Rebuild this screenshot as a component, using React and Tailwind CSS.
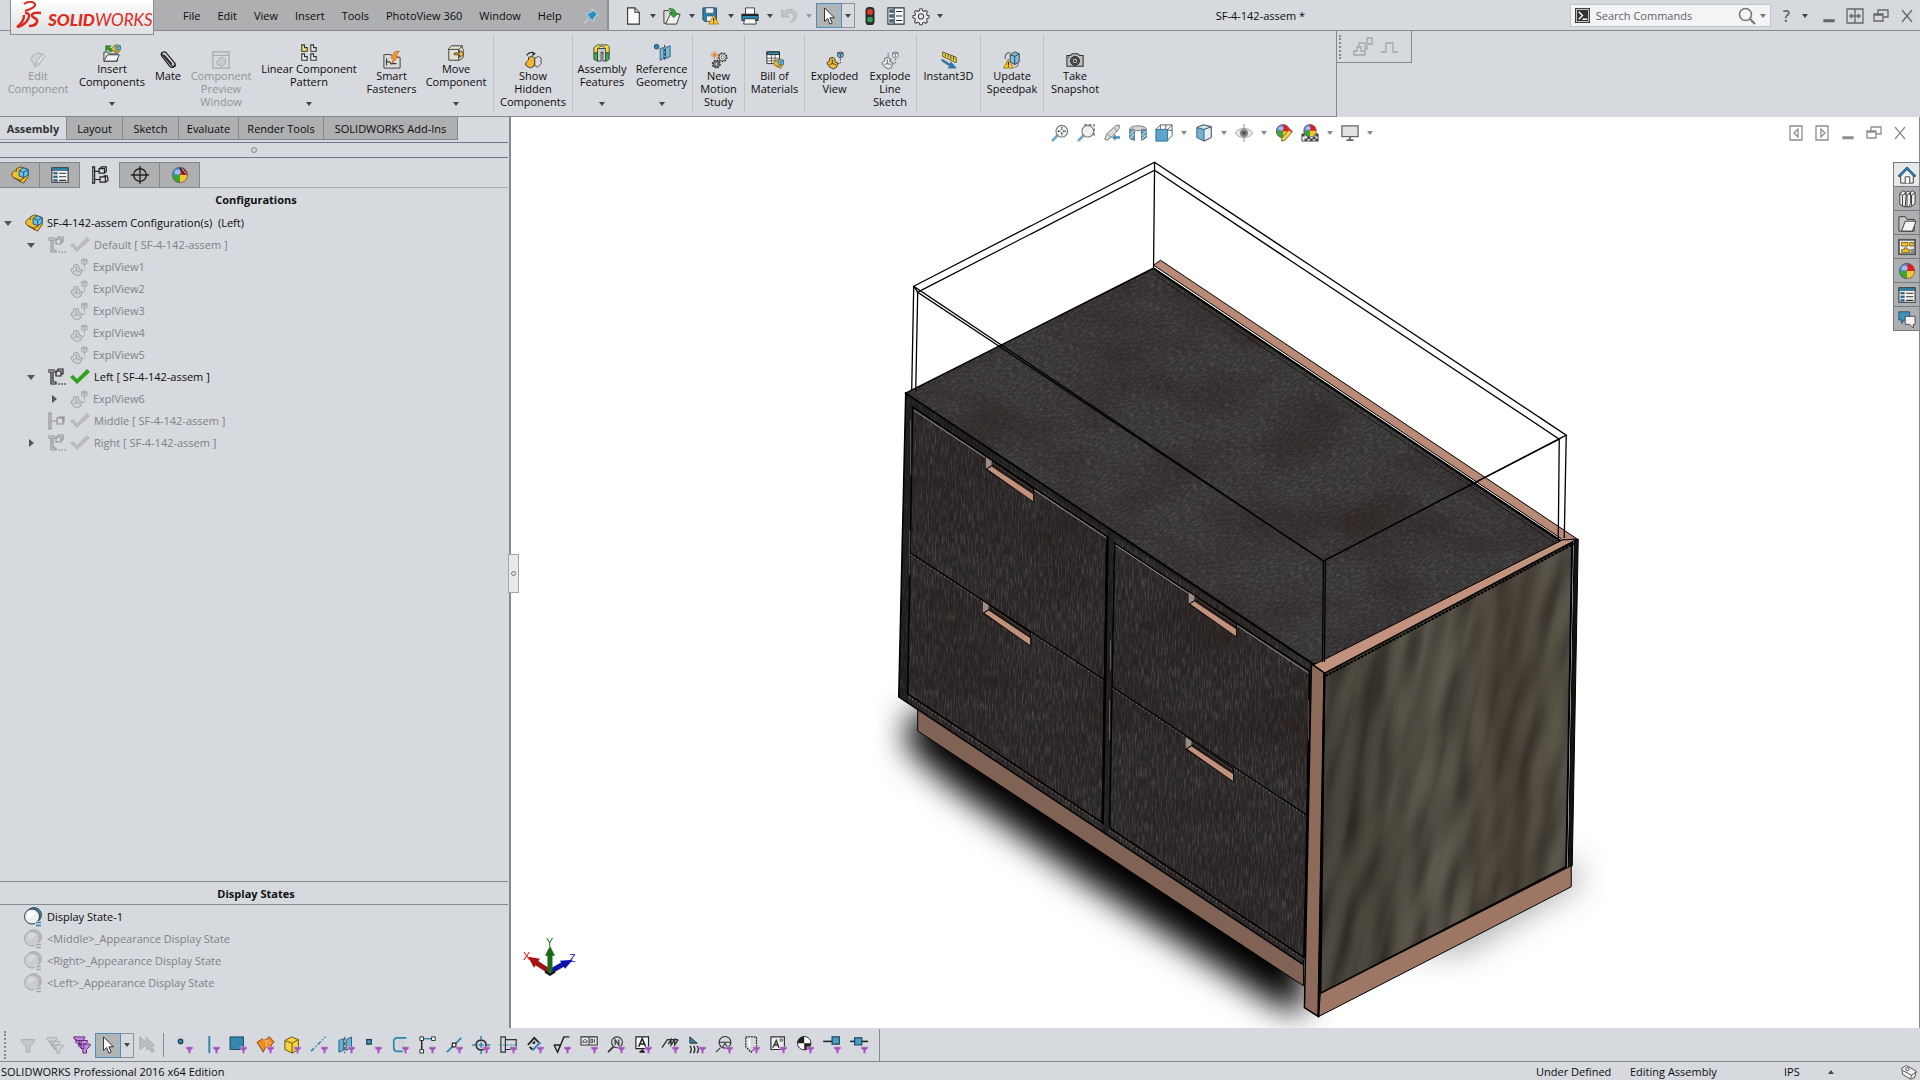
import React from "react";

const K = "#333";
const B = "#2f87b0";
const G = "#9a9c9e";

const Ball = ({ cx = 10, cy = 10, r = 8 }) => (
  <g>
    <circle cx={cx} cy={cy} r={r} fill="#e02020" />
    <path d={`M${cx} ${cy}L${cx} ${cy - r}A${r} ${r} 0 0 0 ${cx - r} ${cy}Z`} fill="#4a8fe0" />
    <path d={`M${cx} ${cy}L${cx - r} ${cy}A${r} ${r} 0 0 0 ${cx} ${cy + r}Z`} fill="#3aa53a" />
    <path d={`M${cx} ${cy}L${cx} ${cy + r}A${r} ${r} 0 0 0 ${cx + r} ${cy}Z`} fill="#f2c62e" />
    <ellipse cx={cx - r * 0.3} cy={cy - r * 0.4} rx={r * 0.4} ry={r * 0.3} fill="#fff" opacity=".45" />
    <circle cx={cx} cy={cy} r={r} fill="none" stroke="#555" strokeWidth=".7" />
  </g>
);

const Part = ({ a = "#f3bd2f", b = "#6cc0e6", s = "#5a4310" }) => (
  <g strokeLinejoin="round">
    <path d="M1 8l3-3 2 1V3l5-2 8 3v8l-5 7-4-2-7-4-2-2z" fill={a} stroke={s} />
    <path d="M3 13l7 3 5-3M10 16v2" stroke={s} fill="none" />
    <path d="M9 5l5-3 5 2v6l-5 3-5-2z" fill={b} stroke="#17506e" />
    <path d="M9 5l5 2 5-3M14 7v6" fill="none" stroke="#17506e" />
  </g>
);

const Expl = ({ a = "#f3bd2f", b = "#6cc0e6", s = K }) => (
  <g strokeLinejoin="round">
    <path d="M1 13l3-2V8l4-1 2 2v3l3 1-1 5-4 2-5-3z" fill={a} stroke={s} />
    <path d="M7 9v5l4 1M7 14l-3 1" fill="none" stroke={s} />
    <path d="M13 2l3-1 3 1v4l-3 2-3-2zM13 2l3 1 3-1M16 3v4" fill={b} stroke={s} strokeWidth=".9" />
    <path d="M16 9v5h-4" fill="none" stroke={s} strokeDasharray="1.5 1.5" />
  </g>
);

const Funnel = () => <path d="M11 12h8v2l-2.6 2v3.500h-2.800v-3.500L11 14z" fill="#a356bd" stroke="#eadcf0" strokeWidth=".5" />;

const Gear = ({ cx, cy, r, fill = "#ddd" }) => (
  <g>
    <circle cx={cx} cy={cy} r={r} fill={fill} stroke={K} strokeWidth="2" strokeDasharray="1.8 1.3" />
    <circle cx={cx} cy={cy} r={r - 0.6} fill={fill} stroke={K} strokeWidth=".8" />
    <circle cx={cx} cy={cy} r={r / 2.6} fill="#fff" stroke={K} strokeWidth=".8" />
  </g>
);

const Cursor = ({ fill = "#fff", stroke = "#222" }) => (
  <path d="M5 1v15l3.500-3.200L11 19l2.600-1.200L11 12h5z" fill={fill} stroke={stroke} strokeLinejoin="round" />
);

const List = () => (
  <g>
    <path d="M1 2h18v16H1z" fill="#f4f6f8" stroke={K} strokeWidth="1.200" />
    <path d="M1 2h18v3H1z" fill={B} stroke={K} strokeWidth=".6" />
    <path d="M3 7h4v2H3zM3 11h4v2H3zM3 15h4v2H3z" fill={B} stroke="#123" strokeWidth=".5" />
    <path d="M9 8h8M9 12h8M9 16h8" stroke={K} strokeWidth="1.200" />
  </g>
);

const Mag = ({ c = "#eef2f5" }) => (
  <g>
    <path d="M2 18l6-6" stroke="#6ea8c8" strokeWidth="3" strokeLinecap="round" />
    <circle cx="12" cy="8" r="6.500" fill={c} stroke="#777" strokeWidth="1.200" />
  </g>
);

const ICONS = {
  editComp: <g fill="none" stroke="#aaacae"><path d="M2 9l3-5 6-2 4 2v5l-4 6-5 1z" fill="#cfd1d3" /><path d="M6 18l2-6 7-9 3 3-7 9zM8 12l3 3" fill="#d9dbdd" /></g>,
  insert: <g><path d="M1 19V9h5l1 2h9v8z" fill="#e4e4e2" stroke={K} /><path d="M1 19l4-7h13l-3 7z" fill="#f4f4f2" stroke={K} /><path d="M3 8V2h6L7 4l4 3-2 2-4-3z" fill="#2f9a2f" stroke="#175c17" strokeWidth=".6" /><g transform="translate(9 0) scale(.55)"><Part /></g></g>,
  mate: <g fill="none" stroke="#222" strokeWidth="1.400" strokeLinecap="round"><path d="M4 4l10 12c1.500 2 5 .5 3.500-2.500L8 2C6 0 1 1.500 3 5.500L12 17c2 2.500 7 1 6-3" /><path d="M6 5l8 9" /></g>,
  preview: <g fill="none" stroke="#a6a8aa"><path d="M1 1h18v18H1zM1 5h18" strokeWidth="1.300" /><path d="M13 3h1M16 3h1" /><path d="M5 12l3-2V8l4-1 3 2v5l-4 3-5-2z" fill="#c9cbcd" /></g>,
  pattern: <g strokeWidth="1.200" stroke={K}>{[[2, 1], [12, 1], [2, 11], [12, 11]].map(([x, y], i) => <path key={i} d={`M${x} ${y}h3v3h3v4h-6z`} fill={i ? "#eef0f2" : "#ffe67a"} />)}</g>,
  smart: <g><path d="M1 4h8l2 3h8v12H1z" fill="#dcdcda" stroke={K} /><path d="M4 8v8M3 12h4l2 2h6" stroke={K} strokeWidth="1.200" fill="none" /><path d="M13 1l5-1-4 6h3l-8 9 3-7H9z" fill="#f6a623" stroke="#b3400c" strokeWidth=".7" /></g>,
  move: <g><path d="M2 5l3-3h12v3l1 1v9l-4 3H2z" fill="#e6e0cf" stroke={K} /><path d="M2 6h11v12M13 6l4-4" fill="none" stroke={K} /><path d="M8 10h6V7l5 4-5 4v-3H8z" fill="#f3c13a" stroke="#222" strokeWidth=".8" /></g>,
  hidden: <g><path d="M2 13l3-3V7l4-1 3 2v5l-1 4-4 2-5-3z" fill="#f3b52f" stroke={K} /><path d="M12 8l4-2 3 2v6l-4 4-3-2z" fill="#ddd" stroke={K} strokeWidth=".9" /><path d="M3 5c2-4 6-4 8-2M9 1l3 2-3 2" fill="none" stroke="#222" strokeWidth="1.300" /></g>,
  asmFeat: <g stroke={K} strokeWidth=".9"><path d="M1 4l4-3h11l2 2v7H1z" fill="#f2dc3c" /><path d="M1 10h4v9l-4-2zM14 10h4v7l-3 2h-1z" fill="#39b54a" /><path d="M5 5h9v14h-3V9H9v10H5z" fill="#c9cccf" /><path d="M6 5c0-3 7-3 7 0z" fill="#eee" /></g>,
  refGeo: <g><circle cx="4" cy="3" r="2.600" fill={B} stroke="#1a4a66" /><path d="M8 5l4-1v12l-4 2zM14 4l5-2v12l-5 2z" fill="#7fb9d6" stroke="#1d5f80" /><path d="M13 1v18" stroke="#222" strokeDasharray="3 1.500" /></g>,
  motion: <g><Gear cx={14} cy={7} r={4.5} fill="#eee" /><Gear cx={7} cy={14.5} r={4} fill="#999" /><path d="M5 0v9M.5 4.500h9M2 1.500l6 6M8 1.500l-6 6" stroke="#e07a22" strokeWidth="1" /></g>,
  bom: <g><path d="M1 1h14v13H1z" fill="#fff" stroke="#222" /><path d="M1 1h14v3H1z" fill={B} stroke="#222" /><path d="M1 8h14M1 11h14M6 4v10M10 4v10" stroke="#333" strokeWidth=".8" /><g transform="translate(8 8) scale(.6)"><Part /></g></g>,
  exploded: <Expl />,
  explSketch: <g><Expl a="#e4e6e8" b="#eef0f2" s="#666" /><path d="M8 2v5M11 8v3" stroke={B} /></g>,
  instant: <g><path d="M3 1l15 6v6L3 6z" fill="#f6d64a" stroke="#5c4c10" /><path d="M6 3v3M9 4v3M12 5v4M15 6v4" stroke="#333" /><path d="M2 9l10 6v-3l6 7-9 0 2-2L2 11z" fill="#2a7fb0" stroke="#184e6e" strokeWidth=".6" /></g>,
  speedpak: <g><path d="M8 4l5-3 5 2v9l-5 3-5-3z" fill="#7cc0e2" stroke={K} /><path d="M8 4l5 2 5-3M13 6v9" fill="none" stroke={K} /><path d="M3 9c-2-3 1-8 5-7M17 13c0 3-2 5-4 5" fill="none" stroke="#666" strokeWidth="1.200" /><path d="M6 9l5.500 10H.500z" fill="#ffc926" stroke="#6c5000" strokeWidth=".7" /><path d="M6 12v3.500M6 16.500v1.200" stroke="#222" strokeWidth="1.300" /></g>,
  camera: <g><path d="M1 5h4l2-2h6l2 2h4v12H1z" fill="#bcbec0" stroke={K} strokeWidth="1.200" /><circle cx="10" cy="11" r="5" fill="#555" stroke="#222" /><circle cx="10" cy="11" r="3" fill="#ddd" stroke="#222" /><circle cx="10" cy="11" r="1.400" fill="#333" /><path d="M2 7h2" stroke="#222" /></g>,
  newDoc: <g><path d="M4 1h8l5 5v13H4z" fill="#fbfbfb" stroke={K} strokeWidth="1.200" /><path d="M12 1v5h5" fill="#ccc" stroke={K} /></g>,
  open: <g><path d="M1 18V4h5l2 2h6v12z" fill="#ddd" stroke={K} /><path d="M3 19l5-11h11l-4 11z" fill="#f1f1ef" stroke={K} /><path d="M6 2c5-1 8 1 8 5h3l-5 5-5-5h3c0-2-1-3-4-5z" fill="#38a038" stroke="#1b601b" strokeWidth=".6" /></g>,
  save: <g><path d="M1 1h15v15H3l-2-2z" fill="#2f81ad" stroke="#173f58" /><path d="M4 1h9v6H4zM5 10h8v6H5z" fill="#eee" stroke="#173f58" strokeWidth=".6" /><path d="M13 9l5.500 10h-11z" fill="#ffc926" stroke="#8a6500" strokeWidth=".7" /><path d="M13 12.500v3M13 17v1" stroke="#222" strokeWidth="1.400" /></g>,
  print: <g><path d="M5 8V1h10v7" fill="#fff" stroke={K} /><path d="M1 8h18v7H1z" fill="#2f87b0" stroke="#222" /><path d="M1 8h18v2H1z" fill="#222" /><path d="M4 13h12l1 6H3z" fill="#f5f5f5" stroke={K} /></g>,
  undo: <path d="M2 3v8h8L7 8c4-3 9-1 8 4-.5 2-2 4-4 5 6-1 9-6 7-10-2-5-9-6-13-2z" fill="#c3c5c7" stroke="#aaacae" strokeWidth=".8" />,
  cursor: <Cursor />,
  traffic: <g><rect x="5" y="0" width="10" height="20" rx="4" fill="#2c2c2c" /><circle cx="10" cy="5.500" r="3.200" fill="#e23b2e" /><circle cx="10" cy="14" r="3.200" fill="#2e9e4a" /></g>,
  list: <g><path d="M1 1h18v18H1z" fill="#f4f6f8" stroke={K} strokeWidth="1.200" /><path d="M3 3h4v3H3zM3 8.500h4v3H3zM3 14h4v3H3z" fill={B} stroke="#123" strokeWidth=".6" /><path d="M8 1v18M10 5h7M10 10h7M10 15h7" stroke={K} strokeWidth="1.100" /></g>,
  gear: <g fill="#e9ebed" stroke="#444" strokeWidth="1.300" strokeLinejoin="round"><path d="M8.500 1h3l.5 2.500 2 .8 2.200-1.300 2 2-1.300 2.200.8 2 2.300.3v2.900l-2.300.5-.8 2 1.300 2.200-2 2-2.200-1.300-2 .8-.5 2.400h-3l-.5-2.400-2-.8-2.200 1.300-2-2 1.300-2.200-.8-2L0 12.400V9.500l2.300-.3.8-2L1.800 5l2-2L6 4.300l2-.8z" /><circle cx="10" cy="10.500" r="3.300" /></g>,
  zoomFit: <g><Mag /><path d="M12 3.500v3M12 9.500v3M7.500 8h3M13.500 8h3" stroke="#333" strokeWidth="1.500" strokeDasharray="1.500 .6" /></g>,
  zoomArea: <g><path d="M8 1h11v14" fill="none" stroke="#555" strokeDasharray="3 2" strokeWidth="1.300" /><Mag /></g>,
  prevView: <g><path d="M2 17l2-6 10-9 4-1v4l-8 9-5 4z" fill="#d8dadc" stroke="#777" /><path d="M5 11l4 4M12 4l4 4" stroke="#777" /><path d="M10 15l4-4v2.500h5v3h-5V19z" fill="#3f90bb" /></g>,
  section: <g stroke="#666" strokeWidth=".9"><path d="M1 5c2-4 16-4 18 0v10l-5 3V8c-1-1-7-1-8 0v10l-5-2z" fill="#d4d7da" /><path d="M1 6h5v12l-5-2zM14 6h5v9l-5 3z" fill="#5aa5cb" /><path d="M1 12l5-5M1 16l5-5M14 13l5-5M14 17l5-5" stroke="#fff" /></g>,
  viewOr: <g><path d="M6 1h13v12l-5 5M6 1v5M12 1v5M19 7h-5M1 6l5-5M14 6l5-5" fill="none" stroke="#555" /><path d="M1 6h13v13H1z" fill="#5da7cd" stroke="#2b6c8f" /></g>,
  cube: <g strokeLinejoin="round"><path d="M2 4l7-3 9 2v12l-8 4-8-4z" fill="#6fb4d8" stroke="#456" /><path d="M10 6l8-3v12l-8 4z" fill="#e6eef3" stroke="#456" /><path d="M2 4l8 2 8-3-9-2z" fill="#cfe6f2" stroke="#456" /></g>,
  eye: <g><path d="M0 10c4-7 16-7 20 0-4 7-16 7-20 0z" fill="#e4e4e4" stroke="#aaa" /><circle cx="10" cy="10" r="4.500" fill="#888" /><circle cx="10" cy="10" r="2" fill="#333" /><path d="M10 0v20" stroke="#777" strokeWidth=".9" /></g>,
  editApp: <g><Ball cx={9} cy={8} r={7.5} /><path d="M7 19l1-4 8-9 3 3-8 9z" fill="#f3cf4e" stroke="#6b5416" strokeWidth=".9" /><path d="M16 6l3 3" stroke="#c33" strokeWidth="2" /></g>,
  scene: <g><path d="M1 11h18v8H1z" fill="#eee" stroke="#444" /><path d="M1 11h3v3H1zM7 14h3v3H7zM13 14h3v3h-3zM4 16h3v3H4zM10 16h3v3h-3zM16 16h3v3h-3zM16 11h3v3h-3z" fill="#444" /><Ball cx={10} cy={7.5} r={7} /></g>,
  monitor: <g><path d="M1 2h18v12H1z" fill="#dfe1e3" stroke="#666" strokeWidth="1.400" /><path d="M9 14h2v3H9zM6 17h8v2H6z" fill="#666" /></g>,
  part: <Part />,
  config: <g fill="none" stroke="#222" strokeWidth="1.300"><path d="M2 1v18M1 1h3v18H1M4 6h5M4 15h6" /><path d="M9 3h6v5H9zM10 2l2-1h5v5l-2 2M10 12h6v6h-6zM14 11h4l1 5-3 2" /></g>,
  dimx: <g fill="none" stroke="#222" strokeWidth="1.500"><circle cx="10" cy="10" r="7" /><path d="M10 0v20M0 10h20" /></g>,
  dispMgr: <g><Ball r={8.5} /><path d="M9 2c4 0 8 4 8 8l-4-2z" fill="#222" /><path d="M12 3l5 6" stroke="#eee" /></g>,
  home: <g><path d="M3 9v10h14V9l-7-6z" fill="#f4f4f4" stroke={K} /><path d="M0 11L10 1l10 10-2 1-8-8-8 8z" fill="#2a86b4" stroke="#134a66" /><path d="M8 19v-7h5v7" fill="#fff" stroke={K} /></g>,
  books: <g fill="#ececec" stroke="#333" strokeLinejoin="round"><path d="M12 4l4-3 3 2v12l-5 4-2-1z" /><path d="M7 4l4-3 3 2v12l-2 4-5-1z" /><path d="M2 4l4-3 3 2v3l-1 13-6-3z" /><path d="M2 4l3 2v12M5 6l4-3M7 4l3 2v13M10 6l4-3M12 4l3 2v12M15 6l4-3" fill="none" /></g>,
  folder: <g stroke="#333"><path d="M1 19V3h7l2 3h8v13z" fill="#c6c8ca" /><path d="M4 19l4-11h12l-4 11z" fill="#f3f3f3" /></g>,
  palette: <g><path d="M0 1h20v18H0z" fill="#555" /><path d="M2 3h16v14H2z" fill="#eee" /><path d="M4 5h7v4H4zM13 5h4v4h-4zM4 16v-3h3v-2h3v2h3v3z" fill="#f7c728" stroke="#5c4300" strokeWidth=".8" /><path d="M14 12h4v5h-4z" fill="#888" /></g>,
  ball: <Ball r={8.5} />,
  props: <List />,
  forum: <g><path d="M1 2h12v9H7l-3 4v-4H1z" fill="#3f93bf" stroke="#1d5270" /><path d="M8 7h11v9h-2v4l-4-4H8z" fill="#f4f4f4" stroke="#444" /></g>,
  pin: <g fill="#2b8fc0" stroke="#e8f4fa" strokeWidth=".8"><path d="M11 1l8 8-3 .5-3 4V17l-4-4-7 6 6-8-4-4 4-1 4-2z" /></g>,
  funnel: <path d="M3 4h14v3l-5 4v7H8v-7L3 7z" fill="#c6c8ca" stroke="#a9abad" />,
  funnels: <g fill="#cfd1d3" stroke="#a9abad"><path d="M1 2h11v2l-4 3v4H6V7L1 4zM4 6h11v2l-4 3v4H9v-4L4 8zM7 10h12v2l-4 3v4h-3v-4l-5-3z" /></g>,
  funnelsOn: <g fill="#c58ade" stroke="#5b2376"><path d="M1 1h12v2l-4 3v4H7V6L1 3zM3 5h13v2l-4 3v4H9v-4L3 7zM6 9h13v2l-4 4v4h-4v-4l-5-4z" /></g>,
  cursorOff: <g><path d="M2 1v14l9-6zM8 1l10 9-3 1 3 6-3 1-3-5-3 3" fill="#bbbdbf" stroke="#a6a8aa" /></g>,
  feedback: <g fill="#f0f0f0" stroke="#333"><path d="M1 5l6-3 12 7-2 8-5 2L2 13z" /><path d="M2 8l11 6 6-4M13 14l-1 4" fill="none" /><circle cx="8" cy="6.500" r="2" /></g>,
  // selection filter tools
  fVertex: <circle cx="5" cy="6" r="2.600" fill={B} stroke="#12384d" strokeWidth="1.200" />,
  fEdge: <path d="M7 0v19" stroke={B} strokeWidth="2.200" />,
  fFace: <path d="M0 1h15v14H0z" fill="#3387ad" stroke="#17445c" />,
  fSurf: <g fill="#f08c22" stroke="#7d3e08"><path d="M0 7l6-4 4 2c1-3 3-4 4-4l5 6c-3 1-3 4-4 7l-4-2c-2 1-3 3-4 6z" /><path d="M6 3c3 1 4 3 5 9M10 5c2 0 4 2 5 4" fill="none" stroke="#ffd9a0" /></g>,
  fSolid: <g stroke="#5a4a08"><path d="M1 5l7-4 8 3v11l-7 4-8-4z" fill="#f6d33f" /><path d="M1 5l8 3 7-4M9 8v11" fill="none" /></g>,
  fAxis: <path d="M0 17L16 1" stroke={B} strokeWidth="1.700" strokeDasharray="5 2 1.500 2" />,
  fPlane: <g><path d="M1 5l5-2v13l-5 2zM9 4l6-3v12l-6 3z" fill="#6fb0d2" stroke="#1d5f80" /><path d="M7.500 1v18" stroke="#222" strokeDasharray="4 1.500" /></g>,
  fPoint: <path d="M2 4h5v5H2z" fill="#4a9dc6" stroke="#12384d" strokeWidth="1.300" />,
  fSketch: <g><path d="M8 3v14M12 3v14M4 7h12M4 12h12" stroke="#c3c6ca" strokeWidth=".6" /><path d="M16 2H6Q2 2 2 6v7q0 4 4 4h6" fill="none" stroke={B} strokeWidth="2" /></g>,
  fSeg: <g><path d="M3 3v14" stroke="#222" strokeWidth="1.600" /><path d="M3 3h13" stroke={B} strokeWidth="1.600" /><path d="M1 1h4v4H1zM14 1h4v4h-4zM1 15h4v4H1z" fill="#fff" stroke="#222" /></g>,
  fMid: <g><path d="M1 18L17 2" stroke={B} strokeWidth="2" /><path d="M7 8h4v4H7z" fill="#fff" stroke="#222" strokeWidth="1.300" /></g>,
  fCenter: <g><circle cx="9" cy="10" r="5.500" fill="none" stroke="#333" strokeWidth="2" /><path d="M9 0v4M9 7v6M9 16v4M-1 10h4M6 10h6M15 10h4" stroke={B} strokeWidth="1.700" /></g>,
  fLine: <g><path d="M1 1h5v17H1zM6 4h12v11H6" fill="none" stroke="#333" strokeWidth="1.300" /><path d="M-1 10h20" stroke={B} strokeDasharray="3 1" /></g>,
  fDim: <g fill="none"><path d="M1 10L8 2l5 5M3 12l3 3" stroke="#222" strokeWidth="2" /><path d="M6 16l9-9" stroke={B} strokeWidth="2.200" /><path d="M5 8l4-3v4z" fill="#222" /></g>,
  fRough: <path d="M0 10h7l-3 8-4-8M4 18L11 1h6" fill="none" stroke="#222" strokeWidth="1.600" />,
  fTol: <g><path d="M0 1h18v9H0zM9 1v9" fill="#eee" stroke="#333" strokeWidth="1.200" /><path d="M2 7h5c0-4-5-4-5 0M11 3.500h2v4h-2zM15 3.500v4" fill="none" stroke="#222" strokeWidth=".9" /></g>,
  fBalloon: <g fill="none" stroke="#333"><circle cx="10" cy="7" r="6" strokeWidth="1.200" /><path d="M8 10V4l4 6V4" strokeWidth="1.300" /><path d="M0 18l6-6" strokeWidth="2" /></g>,
  fDatum: <g stroke="#222" fill="none"><path d="M1 1h14v13H1z" fill="#f6f6f6" strokeWidth="1.300" /><path d="M4 12L8 3l4 9M5.500 9h5" strokeWidth="1.700" /><path d="M5 18l3-3 3 3z" fill="#222" /></g>,
  fWeld: <path d="M0 13L6 4h12M7 9l3-5v6l4-6v6l4-6" fill="none" stroke="#333" strokeWidth="1.500" />,
  fBead: <g fill="none"><path d="M1 1v7h8z" fill={B} stroke="#222" /><path d="M1 11q3 4 0 8M5 11q3 4 0 8M9 11q3 4 0 8" stroke="#222" strokeWidth="1.400" /></g>,
  fTarget: <g fill="none" stroke="#333" strokeWidth="1.200"><circle cx="10" cy="7" r="6.500" /><path d="M3 7h14M7 13l3-5 3 5M0 18l5-5" /></g>,
  fThread: <g><path d="M3 1h12v11l-6 6-6-6z" fill="#d6d8da" stroke="#222" strokeDasharray="2 1" strokeWidth="1.300" /><path d="M6 2h2v10H6z" fill="#fff" /></g>,
  fNote: <g fill="none" stroke="#333"><path d="M1 1h15v14H1z" fill="#eee" strokeWidth="1.300" /><path d="M3 13l4-8 3 8M5 10h4" strokeWidth="1.500" /><circle cx="12.500" cy="4.500" r="1.500" /></g>,
  fMass: <g><circle cx="8" cy="8" r="7.500" fill="#fff" stroke="#222" /><path d="M8 8V.5A7.500 7.500 0 0 0 .5 8zM8 8v7.500A7.500 7.500 0 0 0 15.500 8z" fill="#222" /></g>,
  fConn: <g><path d="M-1 6h11" stroke="#222" strokeWidth="1.700" /><path d="M9 1h8v8H9z" fill="#4a9dc6" stroke="#17445c" strokeWidth="1.300" /></g>,
  fRoute: <g><path d="M-1 6h20" stroke="#222" strokeWidth="1.700" /><path d="M4 2h8v8H4z" fill="#4a9dc6" stroke="#17445c" strokeWidth="1.300" /></g>,
};

const Icon = ({ n, className = "size-[18px]" }) => (
  <svg viewBox="0 0 20 20" className={`shrink-0 overflow-visible ${className}`} aria-hidden="true">{ICONS[n]}</svg>
);

const Caret = ({ c = "#444", className = "" }) => (
  <svg viewBox="0 0 6 4" className={`h-1 w-1.5 shrink-0 ${className}`} aria-hidden="true"><path d="M0 0h6L3 4z" fill={c} /></svg>
);

/* ---------- title bar ---------- */

const Logo = () => (
  <div className="relative z-10 flex h-[35px] w-36 shrink-0 items-center gap-1.5 self-start border border-t-0 border-[#8b8d90] bg-linear-to-b from-white to-[#dedfe1] pl-1 text-[#dd2a1e]">
    <svg viewBox="0 0 27 27" className="mb-1.5 h-[27px] w-[27px] shrink-0" fill="none" stroke="#dd2a1e" strokeWidth="2" aria-hidden="true">
      <path d="M9 3Q15-1 19 2T13 9L10 10" />
      <path d="M10 12Q17 12 12 20 8 25 2 26 9 21 9 14" strokeWidth="2.400" />
      <path d="M26 12q-8-1-9 2c-1 3 7 3 5 7-1 3-5 4-8 4" strokeWidth="2.600" />
    </svg>
    <span className="pt-1 font-['Lato'] text-[17px] leading-none italic"><b className="font-black">SOLID</b>WORKS</span>
  </div>
);

const MENUS = ["File", "Edit", "View", "Insert", "Tools", "PhotoView 360", "Window", "Help"];
const QUICK = [["newDoc", "New"], ["open", "Open"], ["save", "Save"], ["print", "Print"], ["undo", "Undo"]];

const WB = ({ label, d, c, fill }) => (
  <button aria-label={label} className="size-[18px] shrink-0">
    <svg viewBox="0 0 18 18" className="size-[18px]"><path d={d} fill={fill ? c : "none"} stroke={c} strokeWidth="1.300" /></svg>
  </button>
);

const WinBtns = ({ c, full }) => (
  <div className="flex items-center gap-2">
    {!full && <WB label="Collapse left" c={c} d="M3 2h12v14H3zM11 5v8L7 9z" />}
    {!full && <WB label="Collapse right" c={c} d="M3 2h12v14H3zM8 5v8l4-4z" />}
    <WB label="Minimize" c={c} d="M4 13h10v1.500H4z" fill />
    {full && <WB label="Span displays" c={c} d="M1 2h16v14H1zM9 2v14M4 9h10M6 7L4 9l2 2M12 7l2 2-2 2" />}
    <WB label="Restore" c={c} d="M2 7h9v7H2zM6 7V3h10v7h-5M2 8h9" />
    <WB label="Close" c={c} d="M4 3l10 12M14 3L4 15" />
  </div>
);

const SelectBtn = () => (
  <div className="flex h-[25px] shrink-0">
    <button aria-label="Select" className="flex w-[26px] items-center justify-center border border-[#4c91bd] bg-[#b1b3b5]"><Icon n="cursor" /></button>
    <button aria-label="Select options" className="flex w-[13px] items-center justify-center border border-l-0 border-[#909296]"><Caret /></button>
  </div>
);

const TitleBar = () => (
  <header className="flex h-[31px] shrink-0 items-stretch border-b border-[#85888c] pl-2.5">
    <Logo />
    <nav className="flex w-[455px] shrink-0 items-center gap-px border-r-2 border-[#8f9194] bg-[#adafb1] pt-0.5 pr-2 pl-[21px]">
      {MENUS.map((m) => (
        <button key={m} className="px-2 whitespace-nowrap">{m}</button>
      ))}
      <button aria-label="Pin menu" className="ml-auto"><Icon n="pin" className="size-4" /></button>
    </nav>
    <div className="flex shrink-0 items-center pt-px pl-[15px]">
      {QUICK.map(([n, l]) => (
        <button key={n} aria-label={l} className={`flex items-center gap-2 ${n === "undo" ? "w-9" : "w-[39px]"}`}>
          <Icon n={n} /><Caret c={n === "undo" ? "#999" : "#444"} />
        </button>
      ))}
      <SelectBtn />
      <button aria-label="Rebuild" className="ml-1.5"><Icon n="traffic" /></button>
      <button aria-label="File properties" className="ml-2"><Icon n="list" /></button>
      <button aria-label="Options" className="ml-2 flex items-center gap-2"><Icon n="gear" className="size-4" /><Caret /></button>
    </div>
    <h1 className="flex flex-1 items-center justify-center pt-0.5 pl-2">SF-4-142-assem *</h1>
    <div className="flex shrink-0 items-center gap-3 pt-px pr-1">
      <label className="flex h-[23px] w-[201px] items-center border border-[#c4c6c9] bg-[#f3f4f6] pl-1">
        <svg viewBox="0 0 16 16" className="size-[15px] shrink-0" aria-hidden="true"><path d="M0 0h16v16H0z" fill="#333" /><path d="M1.500 1.500h13v13h-13z" fill="none" stroke="#ddd" /><path d="M4 4l4 4-4 4M8 12h5" fill="none" stroke="#fff" strokeWidth="1.500" /></svg>
        <input aria-label="Search Commands" placeholder="Search Commands" className="w-0 flex-1 bg-transparent px-1.5 placeholder:text-[#606266] outline-none" />
        <svg viewBox="0 0 18 18" className="size-[18px] shrink-0" fill="none" stroke="#777" aria-hidden="true"><circle cx="7.500" cy="7.500" r="6" strokeWidth="1.600" /><path d="M12 12l5 5" strokeWidth="2.200" /></svg>
        <Caret c="#777" className="mx-1" />
      </label>
      <button aria-label="Help" className="flex items-center gap-3 text-base font-semibold text-[#666]">?<Caret /></button>
      <WinBtns c="#666" full />
    </div>
  </header>
);

/* ---------- command ribbon ---------- */

const RIBBON = [
  ["editComp", ["Edit", "Component"], "w-[76px]", "dim"],
  ["insert", ["Insert", "Components"], "w-[72px]", "menu"],
  ["mate", ["Mate"], "w-10"],
  ["preview", ["Component", "Preview", "Window"], "w-[66px]", "dim"],
  ["pattern", ["Linear Component", "Pattern"], "w-[110px]", "menu"],
  ["smart", ["Smart", "Fasteners"], "w-[55px]"],
  ["move", ["Move", "Component"], "w-[74px]", "menu"],
  null,
  ["hidden", ["Show", "Hidden", "Components"], "w-[78px]"],
  null,
  ["asmFeat", ["Assembly", "Features"], "w-[58px]", "menu"],
  ["refGeo", ["Reference", "Geometry"], "w-[61px]", "menu"],
  null,
  ["motion", ["New", "Motion", "Study"], "w-[51px]"],
  null,
  ["bom", ["Bill of", "Materials"], "w-[59px]"],
  null,
  ["exploded", ["Exploded", "View"], "w-[59px]"],
  ["explSketch", ["Explode", "Line", "Sketch"], "w-[52px]"],
  null,
  ["instant", ["Instant3D"], "w-[63px]"],
  null,
  ["speedpak", ["Update", "Speedpak"], "w-[62px]"],
  null,
  ["camera", ["Take", "Snapshot"], "w-[62px]"],
];

const Ribbon = () => (
  <div className="flex h-[86px] shrink-0 items-start">
    <div className="flex h-full w-[1337px] shrink-0 border-r border-b border-[#85888c]">
      {RIBBON.map((r, i) =>
        r === null ? (
          <div key={i} className="my-1 w-px shrink-0 bg-[#bfc2c6]" />
        ) : (
          <button key={i} disabled={r[3] === "dim"} className={`flex shrink-0 flex-col items-center pb-2 ${r[2]} ${r[3] === "menu" ? "pt-[13px]" : "pt-5"} ${r[3] === "dim" ? "text-[#929497]" : ""}`}>
            <Icon n={r[0]} />
            {r[1].map((t) => <span key={t} className="block leading-[13px] whitespace-nowrap">{t}</span>)}
            {r[3] === "menu" && <Caret className="mt-auto mb-0.5" />}
          </button>
        )
      )}
    </div>
    <div className="flex h-8 w-[75px] items-center border-r border-b border-[#85888c] pl-0.5">
      <div className="h-6 border-l-2 border-dotted border-[#85888c]" />
      <svg viewBox="0 0 48 20" className="ml-3 h-5 w-12" fill="none" stroke="#a4a6a9" strokeWidth="1.300" aria-hidden="true">
        <path d="M1 18v-4h3v-4h4v4h4v4zM6 10V6h6v6h2V8M14 1h5v6h-5z" /><path d="M28 15h5V6h7v9h5" />
      </svg>
    </div>
  </div>
);

/* ---------- left panel ---------- */

const TABS = [["Assembly", "w-[67px]"], ["Layout", "w-14"], ["Sketch", "w-14"], ["Evaluate", "w-[60px]"], ["Render Tools", "w-[85px]"], ["SOLIDWORKS Add-Ins", "w-[134px]"]];
const PTABS = [["part", "FeatureManager"], ["props", "PropertyManager"], ["config", "ConfigurationManager"], ["dimx", "DimXpertManager"], ["dispMgr", "DisplayManager"]];

const TreeArrow = ({ s }) => (
  <span className="flex w-4 shrink-0 justify-center">
    {s === "open" && <svg viewBox="0 0 8 5" className="h-[5px] w-2"><path d="M0 0h8L4 5z" fill="#555" /></svg>}
    {s === "shut" && <svg viewBox="0 0 5 8" className="h-2 w-[5px]"><path d="M0 0v8l5-4z" fill="#555" /></svg>}
  </span>
);

const CfgIcon = ({ c, mid }) => (
  <svg viewBox="0 0 19 18" className="h-[18px] w-[19px] shrink-0" fill="none" stroke={c} strokeWidth="1.200" aria-hidden="true">
    {mid ? <path d="M2 1h2v16H2zM4 9h6M10 6h6v6h-6zM12 6V5h5v5h-1" /> : <path d="M1 2h7M1 4h3v12h5v-2H6V4h4M9 3h5v5H9zM11 3V1h5v5h-2M11 16h2M14 16h2M17 16h2" />}
  </svg>
);

const Check = ({ on }) => (
  <svg viewBox="0 0 20 16" className="h-4 w-5 shrink-0" aria-hidden="true"><path d="M0 8l3-2 4 4L17 0l3 3L7 15z" fill={on ? "#35a01f" : "#b9bbbd"} /></svg>
);

const TREE = [
  { k: "cfg", t: "Default [ SF-4-142-assem ]", a: "open" },
  ...[1, 2, 3, 4, 5].map((n) => ({ k: "view", t: `ExplView${n}` })),
  { k: "cfg", t: "Left [ SF-4-142-assem ]", a: "open", on: true },
  { k: "view", t: "ExplView6", a: "shut" },
  { k: "cfg", t: "Middle [ SF-4-142-assem ]", mid: true },
  { k: "cfg", t: "Right [ SF-4-142-assem ]", a: "shut" },
];

const DisplayBall = ({ on }) => (
  <svg viewBox="0 0 18 20" className="h-5 w-[18px] shrink-0" aria-hidden="true">
    <circle cx="10" cy="8" r="7.500" fill={on ? B : "#bbb"} stroke={on ? K : "#aaa"} strokeWidth=".8" />
    <circle cx="8" cy="9.500" r="7.500" fill={on ? "#eef0f2" : "#c9cbcd"} stroke={on ? K : "#a6a8aa"} />
    <path d="M4 5q5-3 8 1-3 4-8 5z" fill="#fff" opacity={on ? ".9" : ".25"} />
    <path d="M11 14h7v6h-7z" fill="#d6d9dd" /><path d="M12 15.500h5M12 18.500h5" stroke={on ? B : "#a6a8aa"} strokeWidth="1.600" />
  </svg>
);

const STATES = ["Display State-1", "<Middle>_Appearance Display State", "<Right>_Appearance Display State", "<Left>_Appearance Display State"];

const LeftPanel = () => (
  <aside className="flex w-[511px] shrink-0 flex-col border-r-2 border-[#85888c] pr-px">
    <div className="flex h-[23px] shrink-0">
      {TABS.map(([t, w], i) => (
        <button key={t} className={`shrink-0 border-r border-b border-[#85888c] pt-0.5 whitespace-nowrap ${w} ${i ? "bg-[#adafb1]" : "border-b-[#a9acb0] font-bold text-[#333]"}`}>{t}</button>
      ))}
    </div>
    <div className="mt-0.5 flex h-4 shrink-0 items-center justify-center border-y border-[#70768a]">
      <span className="size-1.5 rounded-full border border-[#85888c]" />
    </div>
    <div className="mt-1 flex h-[26px] shrink-0 border-b border-[#a9acb0]">
      {PTABS.map(([n, l], i) => (
        <button key={n} aria-label={l} className={`-mb-px flex w-10 items-center justify-center border-r border-[#85888c] ${i === 2 ? "bg-[#d6d9dd]" : "border-t border-b bg-[#adafb1]"}`}><Icon n={n} /></button>
      ))}
    </div>
    <h2 className="flex h-6 shrink-0 items-center justify-center pl-1 font-bold text-[#111]">Configurations</h2>
    <ul className="flex-1">
      <li className="flex h-[22px] items-center"><TreeArrow s="open" /><span className="ml-[9px]"><Icon n="part" /></span><span className="ml-1 whitespace-pre">SF-4-142-assem Configuration(s)  (Left)</span></li>
      {TREE.map((r) => (
        <li key={r.t} className={`flex h-[22px] items-center ${r.on ? "" : "text-[#808285]"} ${r.k === "view" ? "pl-[46px]" : "pl-[23px]"}`}>
          <TreeArrow s={r.a} />
          {r.k === "view" ? (
            <svg viewBox="0 0 20 20" className="ml-2 size-[18px]" aria-hidden="true"><Expl a="#cfd1d3" b="#cfd1d3" s={G} /></svg>
          ) : (
            <span className="ml-2 flex items-center gap-1"><CfgIcon c={r.on ? "#222" : "#929497"} mid={r.mid} /><Check on={r.on} /></span>
          )}
          <span className={r.k === "view" ? "ml-[5px]" : "ml-1"}>{r.t}</span>
        </li>
      ))}
    </ul>
    <h2 className="flex h-6 shrink-0 items-center justify-center border-y border-[#85888c] pt-0.5 pl-1 font-bold text-[#111]">Display States</h2>
    <ul className="h-[123px] shrink-0 pt-px pl-6">
      {STATES.map((s, i) => (
        <li key={s} className={`flex h-[22px] items-center gap-[5px] ${i ? "text-[#808285]" : ""}`}><DisplayBall on={!i} />{s}</li>
      ))}
    </ul>
  </aside>
);

/* ---------- graphics area ---------- */

const Handle = ({ x, y }) => (
  <g transform={`translate(${x} ${y})`}>
    <path d="M0 0l48 32v12L0 12z" fill="#241f1e" stroke="#000" />
    <path d="M0 0v12l6-4V4z" fill="#9a8d86" />
    <path d="M1 12l5-3 42 28v8z" fill="#c1917b" stroke="#000" strokeWidth=".8" />
    <path d="M6 5l41 28" stroke="#8b6757" strokeDasharray="1 1" />
  </g>
);

const Model = () => (
  <svg viewBox="511 117 1409 911" preserveAspectRatio="xMidYMid meet" className="h-full w-full" role="img" aria-label="Four drawer cabinet model">
    <defs>
      <filter id="grainV" x="0" y="0" width="1" height="1" colorInterpolationFilters="sRGB">
        <feTurbulence type="fractalNoise" baseFrequency=".7 .09" numOctaves="3" seed="4" />
        <feColorMatrix values="0 0 0 0 .45  0 0 0 0 .43  0 0 0 0 .42  1.800 0 0 0 -.75" />
      </filter>
      <filter id="grainT" x="0" y="0" width="1" height="1" colorInterpolationFilters="sRGB">
        <feTurbulence type="fractalNoise" baseFrequency=".2 .8" numOctaves="3" seed="9" />
        <feColorMatrix values="0 0 0 0 .5  0 0 0 0 .48  0 0 0 0 .48  1.800 0 0 0 -.75" />
      </filter>
      <filter id="blotch" x="0" y="0" width="1" height="1" colorInterpolationFilters="sRGB">
        <feTurbulence type="fractalNoise" baseFrequency=".012 .02" numOctaves="2" seed="3" />
        <feColorMatrix values="0 0 0 0 .15  0 0 0 0 .11  0 0 0 0 .1  0 2 0 0 -.8" />
      </filter>
      <filter id="ripple" x="0" y="0" width="1" height="1" colorInterpolationFilters="sRGB">
        <feTurbulence type="fractalNoise" baseFrequency=".05 .016" numOctaves="1" seed="7" result="n" />
        <feDiffuseLighting in="n" surfaceScale="6" lightingColor="#68645a">
          <feDistantLight azimuth="190" elevation="48" />
        </feDiffuseLighting>
      </filter>
      <filter id="soft" x="-.3" y="-.3" width="1.600" height="1.600"><feGaussianBlur stdDeviation="16" /></filter>
      <linearGradient id="oliveTone" x1="0" x2="1"><stop offset="0" stopColor="#1c1c10" stopOpacity=".05" /><stop offset=".2" stopColor="#15150a" stopOpacity=".25" /><stop offset=".45" stopColor="#6b6857" stopOpacity=".15" /><stop offset=".75" stopColor="#2f1c10" stopOpacity=".28" /><stop offset="1" stopColor="#6b6857" stopOpacity=".2" /></linearGradient>
      <clipPath id="topClip"><path d="M906 393l248-125 408 273-239 122-9 1z" /></clipPath>
      <clipPath id="frontClip"><path d="M906 393l407 271-9 301-405-268z" /></clipPath>
      <clipPath id="sideClip"><path d="M1325 673l248-131-6 325-246 127z" /></clipPath>
    </defs>

    <g filter="url(#soft)">
      <path d="M908 716l50-10 346 230v80l-30-12-190-124-130-92-46-40z" fill="#000" />
      <path d="M1400 950l170-90 14 20-120 72z" fill="#000" opacity=".35" />
    </g>

    <path d="M918 705v26l386 255v-25z" fill="#806354" stroke="#000" />

    <g clipPath="url(#frontClip)">
      <path d="M890 380h430v600H890z" fill="#292626" />
      <rect x="890" y="380" width="430" height="600" filter="url(#grainV)" opacity=".6" />
      <rect x="890" y="380" width="430" height="600" filter="url(#blotch)" opacity=".4" />
      <path d="M899 380h15l-6 330h-9zM1107 520h7l-5 320h-6zM899 380l16 10 398 266v8l-401-258z" fill="#141313" opacity=".45" />
    </g>
    <path d="M906 393l407 271-9 301-405-268z" fill="none" stroke="#000" strokeWidth="1.500" />

    <g fill="none" stroke="#000" strokeWidth="1.500">
      <path d="M913 407l194 129-4 287-195-129zM1115 543l195 128-5 287-195-130z" />
      <path d="M911 553l194 127M1113 687l194 128" strokeWidth="1.200" />
      <path d="M1108 536l-5 289" strokeWidth="2.500" />
    </g>
    <g fill="none" stroke="#a8a09c" strokeWidth=".9">
      <path d="M914 410l193 128M1116 545l193 128" />
      <path d="M911 555l194 127M1113 689l194 128M909 697l194 128M1110 831l195 129" strokeDasharray="1 3" />
      <path d="M911 420v55M910 530v45M1111 640v30M1110 700v40M1309 700v40" strokeWidth=".7" opacity=".7" />
    </g>
    <Handle x={986} y={457} />
    <Handle x={983} y={601} />
    <Handle x={1189} y={592} />
    <Handle x={1186} y={737} />

    <g clipPath="url(#topClip)">
      <path d="M900 260h670v410H900z" fill="#373434" />
      <g transform="rotate(-26 1230 460)">
        <rect x="880" y="130" width="720" height="680" filter="url(#grainT)" opacity=".55" />
      </g>
      <rect x="900" y="260" width="670" height="410" filter="url(#blotch)" opacity=".5" />
    </g>
    <path d="M906 393l248-125 408 273-239 122-9 1z" fill="none" stroke="#000" strokeWidth="1.500" />

    <path d="M1154 265l7-5 417 279-14 1z" fill="#b98a75" stroke="#000" />
    <path d="M1155 269l406 272" stroke="#000" strokeWidth="2" />
    <path d="M1154 274l402 269" stroke="#000" strokeWidth=".8" strokeDasharray="2 1" />

    <g clipPath="url(#sideClip)">
      <path d="M1310 530h270v480h-270z" fill="#4b483b" />
      <g transform="rotate(12 1445 770)"><rect x="1230" y="470" width="430" height="600" filter="url(#ripple)" opacity=".8" /></g>
      <path d="M1310 530h270v480h-270z" fill="url(#oliveTone)" />
    </g>
    <path d="M1325 673l248-131-6 325-246 127z" fill="none" stroke="#000" strokeWidth="2" />
    <path d="M1575 541l4-2-6 327-4 2z" fill="#141212" stroke="#000" />
    <path d="M1314 665l249-125 15-1-253 134z" fill="#c1937e" stroke="#000" />
    <path d="M1326 676l250-133" stroke="#000" strokeWidth="2" strokeDasharray="3 1" />
    <path d="M1312 664l13 9-6 344-14-9z" fill="#8d6a5a" stroke="#000" strokeWidth="1.500" />
    <path d="M1321 994l251-128v21l-253 130z" fill="#9e7764" stroke="#000" />
    <path d="M1325 673l-6 344" stroke="#000" strokeWidth="2.200" />

    <g fill="none" stroke="#000" strokeWidth="1.300">
      <path d="M914 286l241-124 412 273-243 126z" />
      <path d="M918 292l237-122 405 269-236 122zM914 286l4 6M1155 162v8" />
      <path d="M914 286l-2 104M918 292l-2 99M1155 170l-1 98M1567 435l-2 103M1560 439l-1 101" />
      <path d="M1324 561l-1 101M1326 561l-1 101" />
    </g>

    <g strokeWidth="4" fontFamily="Liberation Sans" fontSize="11">
      <path d="M550 972l-14-9" stroke="#9c1414" strokeWidth="5" /><path d="M528 957l12 2-6 9z" fill="#a11" />
      <path d="M550 972l14-8" stroke="#1414a8" strokeWidth="5" /><path d="M573 960l-13 1 5 8z" fill="#11a" />
      <path d="M550 973v-20" stroke="#1a6a1a" strokeWidth="5" /><path d="M550 946l5 10h-10z" fill="#186a18" />
      <path d="M545 972l5 3 5-3" stroke="#111" strokeWidth="2" fill="none" />
      <text x="523" y="960" fill="#e01010">X</text><text x="546" y="946" fill="#158015">Y</text><text x="569" y="962" fill="#1010e0">Z</text>
    </g>
  </svg>
);

const HUD = [["zoomFit"], ["zoomArea"], ["prevView"], ["section"], ["viewOr", 1], ["cube", 1], ["eye", 1], ["editApp"], ["scene", 1], ["monitor", 1]];
const PANE = ["home", "books", "folder", "palette", "ball", "props", "forum"];

const Viewport = () => (
  <main className="relative min-w-0 flex-1 border-r border-[#85888c] bg-white">
    <Model />
    <div className="absolute top-[7px] left-[540px] flex items-center gap-2">
      {HUD.map(([n, m]) => (
        <button key={n} aria-label={n} className="flex items-center gap-2"><Icon n={n} />{m && <Caret c="#888" />}</button>
      ))}
    </div>
    <div className="absolute top-[7px] right-2.5"><WinBtns c="#8b8d90" /></div>
    <div className="absolute top-[45px] right-0 flex w-[26px] flex-col border-t border-l border-[#777a7e]">
      {PANE.map((n, i) => (
        <button key={n} aria-label={n} className={`flex h-6 items-center justify-center border-b border-[#777a7e] ${i ? "bg-[#adafb1]" : "bg-[#e6e8ea]"}`}><Icon n={n} /></button>
      ))}
    </div>
    <button aria-label="Collapse panel" className="absolute top-[437px] left-[-3px] flex h-[39px] w-[11px] items-center justify-center border border-[#a5a7aa] bg-[#e6e8ea]">
      <span className="size-[5px] rounded-full border border-[#777]" />
    </button>
  </main>
);

/* ---------- bottom bars ---------- */

const FILTERS = ["fVertex", "fEdge", "fFace", "fSurf", "fSolid", "fAxis", "fPlane", "fPoint", "fSketch", "fSeg", "fMid", "fCenter", "fLine", "fDim", "fRough", "fTol", "fBalloon", "fDatum", "fWeld", "fBead", "fTarget", "fThread", "fNote", "fMass", "fConn", "fRoute"];

const FilterBar = () => (
  <div className="flex h-[34px] shrink-0 items-center border-b border-[#85888c] pt-px">
    <div className="ml-1 h-7 border-l-2 border-dotted border-[#85888c]" />
    {["funnel", "funnels", "funnelsOn"].map((n) => (
      <button key={n} aria-label={n} className="flex w-[27px] justify-center first-of-type:ml-2"><Icon n={n} /></button>
    ))}
    <SelectBtn />
    <button aria-label="Clear selection" className="ml-1"><Icon n="cursorOff" /></button>
    <div className="mx-[7px] h-6 w-px bg-[#85888c]" />
    {FILTERS.map((n) => (
      <button key={n} aria-label={n} className="flex w-[27px] justify-center">
        <svg viewBox="0 0 20 20" className="size-[18px] overflow-visible" aria-hidden="true">{ICONS[n]}<Funnel /></svg>
      </button>
    ))}
    <div className="ml-1.5 h-full w-px bg-[#85888c]" />
  </div>
);

const StatusBar = () => (
  <footer className="flex h-[18px] shrink-0 items-center pt-0.5 pr-[3px] pl-px">
    <span className="flex-1">SOLIDWORKS Professional 2016 x64 Edition</span>
    <span className="w-[94px]">Under Defined</span>
    <span className="w-[154px]">Editing Assembly</span>
    <span className="w-11">IPS</span>
    <Caret className="mr-[67px] rotate-180" />
    <Icon n="feedback" className="size-4" />
  </footer>
);

export default function App() {
  return (
    <div className="flex h-screen flex-col overflow-hidden bg-[#d6d9dd] font-['Open_Sans','Noto_Sans',sans-serif] text-[11px] leading-4 text-[#0c0c0c]">
      <TitleBar />
      <Ribbon />
      <div className="flex min-h-0 flex-1">
        <LeftPanel />
        <Viewport />
      </div>
      <FilterBar />
      <StatusBar />
    </div>
  );
}
